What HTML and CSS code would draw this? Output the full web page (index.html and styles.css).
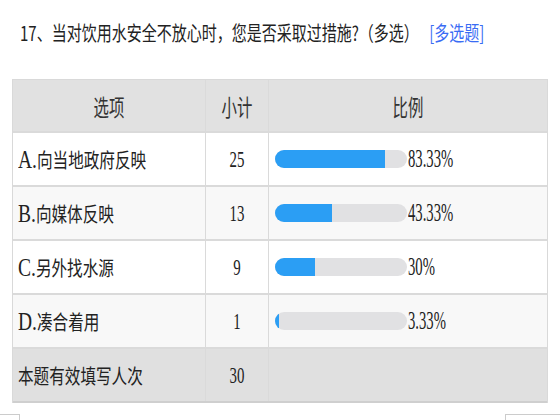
FILE: index.html
```html
<!DOCTYPE html>
<html lang="zh-CN">
<head>
<meta charset="utf-8">
<title>第17题</title>
<link rel="stylesheet" href="styles.css">
</head>
<body>
<div class="title">
  <span class="title-line">17、当对饮用水安全不放心时，您是否采取过措施?（多选）<span class="tag">[多选题]</span></span>
</div>

<div class="stats">
  <div class="row head">
    <div class="cell c1 center"><span class="th">选项</span></div>
    <div class="cell c2 center"><span class="th">小计</span></div>
    <div class="cell c3 center"><span class="th">比例</span></div>
  </div>
  <div class="row">
    <div class="cell c1"><span class="opt"><span class="lat">A.</span>向当地政府反映</span></div>
    <div class="cell c2 center"><span class="num">25</span></div>
    <div class="cell c3"><div class="bar"><div class="fill" style="width:83.33%"></div></div><span class="pct">83.33%</span></div>
  </div>
  <div class="row alt">
    <div class="cell c1"><span class="opt"><span class="lat">B.</span>向媒体反映</span></div>
    <div class="cell c2 center"><span class="num">13</span></div>
    <div class="cell c3"><div class="bar"><div class="fill" style="width:43.33%"></div></div><span class="pct">43.33%</span></div>
  </div>
  <div class="row">
    <div class="cell c1"><span class="opt"><span class="lat">C.</span>另外找水源</span></div>
    <div class="cell c2 center"><span class="num">9</span></div>
    <div class="cell c3"><div class="bar"><div class="fill" style="width:30%"></div></div><span class="pct">30%</span></div>
  </div>
  <div class="row alt">
    <div class="cell c1"><span class="opt"><span class="lat">D.</span>凑合着用</span></div>
    <div class="cell c2 center"><span class="num">1</span></div>
    <div class="cell c3"><div class="bar"><div class="fill" style="width:3.33%"></div></div><span class="pct">3.33%</span></div>
  </div>
  <div class="row total">
    <div class="cell c1"><span class="opt">本题有效填写人次</span></div>
    <div class="cell c2 center"><span class="num">30</span></div>
    <div class="cell c3"></div>
  </div>
</div>

<div class="foot">
  <div class="box-l"></div>
  <div class="box-r"></div>
</div>
</body>
</html>
```

FILE: styles.css
```css
html, body {
  margin: 0;
  padding: 0;
  background: #ffffff;
  overflow: hidden;
}

body {
  width: 560px;
  height: 420px;
  color: #222222;
  font-family: "Noto Sans CJK SC", "Liberation Sans", sans-serif;
}

.title {
  padding: 20px 0 0 20px;
  height: 26px;
  margin-bottom: 33px;
  line-height: 26px;
  overflow: hidden;
  white-space: nowrap;
}

.title-line {
  display: inline-block;
  font-size: 20px;
  color: #222222;
  transform: scaleX(0.75);
  transform-origin: left center;
}

.tag {
  margin-left: 14px;
  color: #3a6cf4;
}

.stats {
  margin-left: 12px;
  width: 536px;
  box-sizing: border-box;
  border: 1px solid #d9d9d9;
  border-bottom: none;
}

.row {
  display: grid;
  grid-template-columns: 193px 63px 1fr;
  height: 54px;
  box-sizing: border-box;
  border-bottom: 2px solid #dadada;
  background: #ffffff;
}

.row.head {
  height: 53px;
  background: #e1e1e1;
}

.row.alt {
  background: #f8f8f8;
}

.row.total {
  background: #e0e0e0;
  border-bottom: 2px solid #cfcfcf;
}

.cell {
  display: flex;
  align-items: center;
  box-sizing: border-box;
  white-space: nowrap;
  overflow: hidden;
}

.c1 {
  border-right: 1px solid #dadada;
  padding-left: 5px;
}

.c2 {
  border-right: 1px solid #dadada;
}

.c3 {
  padding-left: 6px;
}

.center {
  justify-content: center;
  padding-left: 0;
}

.th {
  display: inline-block;
  font-size: 23px;
  color: #333333;
  transform: scaleX(0.67);
  transform-origin: center center;
}

.opt {
  display: inline-block;
  font-size: 20px;
  color: #222222;
  transform: scaleX(0.78);
  transform-origin: left center;
}

.lat {
  font-family: "Liberation Serif", serif;
  font-size: 25px;
}

.num {
  display: inline-block;
  font-family: "Liberation Serif", serif;
  font-size: 24px;
  color: #222222;
  transform: scaleX(0.62);
  transform-origin: center center;
}

.bar {
  flex: none;
  width: 132px;
  height: 18px;
  border-radius: 9px;
  background: #e1e1e3;
  overflow: hidden;
}

.fill {
  height: 100%;
  background: #2b9ef4;
}

.pct {
  display: inline-block;
  margin-left: 1px;
  font-family: "Liberation Serif", serif;
  font-size: 26px;
  color: #222222;
  transform: scaleX(0.565);
  transform-origin: left center;
}

.foot {
  display: flex;
  justify-content: space-between;
  margin-top: 11px;
  height: 20px;
}

.box-l {
  width: 20px;
  box-sizing: border-box;
  border-top: 1px solid #cccccc;
  border-right: 1px solid #cccccc;
}

.box-r {
  width: 55px;
  box-sizing: border-box;
  border-top: 1px solid #cccccc;
  border-left: 1px solid #cccccc;
}
```
